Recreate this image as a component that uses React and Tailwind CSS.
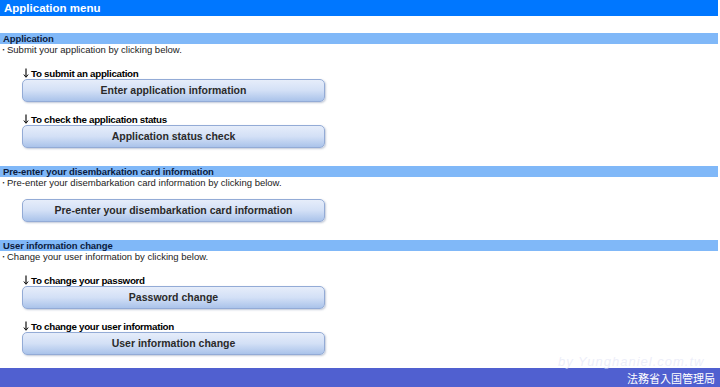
import React from 'react';

const sections = [
  {
    title: 'Application',
    desc: 'Submit your application by clicking below.',
    items: [
      { label: 'To submit an application', button: 'Enter application information' },
      { label: 'To check the application status', button: 'Application status check' },
    ],
  },
  {
    title: 'Pre-enter your disembarkation card information',
    desc: 'Pre-enter your disembarkation card information by clicking below.',
    items: [{ label: null, button: 'Pre-enter your disembarkation card information' }],
  },
  {
    title: 'User information change',
    desc: 'Change your user information by clicking below.',
    items: [
      { label: 'To change your password', button: 'Password change' },
      { label: 'To change your user information', button: 'User information change' },
    ],
  },
];

const font = { fontFamily: '"Liberation Sans", "Noto Sans CJK JP", Arial, sans-serif' };

const DownArrow = () => (
  <svg width="6" height="10" viewBox="0 0 6 10" className="mr-[2px] mb-[1px]">
    <path d="M3 0.5 V9" stroke="#111" strokeWidth="1.2" fill="none" />
    <path d="M0.8 6.5 L3 9.3 L5.2 6.5" stroke="#111" strokeWidth="1" fill="none" />
  </svg>
);

const App = () => {
  return (
    <div className="relative flex flex-col h-[387px] w-[720px] bg-white overflow-hidden" style={font}>
      <div className="h-[16px] bg-[#0077ff] text-white font-bold text-[11.5px] leading-[16px] pl-[4px] mr-[2px]">
        Application menu
      </div>

      <div className="mt-[17px]">
        {sections.map((s, i) => (
          <section key={i} className={i === 2 ? '' : 'mb-[18px]'}>
            <h3 className="h-[11px] bg-[#80b8f8] text-[#0b1b3d] font-bold text-[9.5px] leading-[11px] tracking-[-0.1px] pl-[3px] mr-[2px]">
              {s.title}
            </h3>
            <p className="h-[12px] text-[9.5px] leading-[12px] text-[#222]">
              <span className="text-[7px] align-middle">・</span>{s.desc}
            </p>
            <div className="pl-[23px]">
              {s.items.map((it, j) => (
                <div key={j} className={it.label ? 'mt-[11px]' : 'mt-[10px]'}>
                  {it.label && (
                    <div className="h-[12px] flex items-end text-[9.8px] leading-[11px] font-bold text-black tracking-[-0.3px]">
                      <DownArrow />
                      {it.label}
                    </div>
                  )}
                  <button className="-ml-[1px] w-[303px] h-[23px] rounded-[5px] border border-[#93abd6] bg-gradient-to-b from-[#e6edfa] via-[#d3e0f6] to-[#aac3ea] shadow-[1px_1px_2px_rgba(80,100,140,0.35)] text-[10.5px] font-bold text-[#2a2a2a] flex items-center justify-center">
                    {it.button}
                  </button>
                </div>
              ))}
            </div>
          </section>
        ))}
      </div>

      <div className="mt-auto h-[19px] bg-[#5060d0] flex items-end justify-end pr-[5px] pb-[1px]">
        <span className="text-white text-[11px] leading-[14px]">法務省入国管理局</span>
      </div>

      <span className="absolute left-[558px] top-[354px] whitespace-nowrap text-[13px] leading-[15px] italic text-[#dfe3f5]/60 tracking-[1px]">
        by Yunghaniel.com.tw
      </span>
    </div>
  );
};

export default App;
